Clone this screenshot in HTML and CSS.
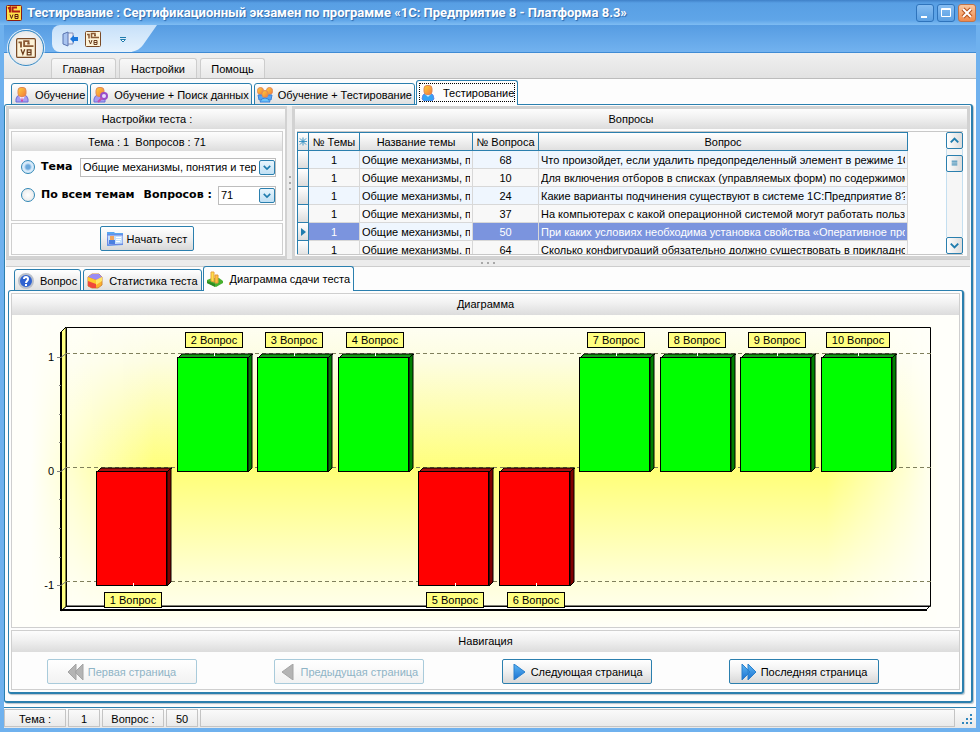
FILE: index.html
```html
<!DOCTYPE html>
<html lang="ru">
  <head>
    <meta charset="UTF-8" />
    <meta name="viewport" content="width=device-width, initial-scale=1.0" />
    <title>Тестирование : Сертификационный экзамен</title>
    <link rel="stylesheet" href="styles.css">
  </head>
  <body>
    <!-- shared icons -->
    <svg class="defs" width="0" height="0" aria-hidden="true">
      <defs>
        <linearGradient id="skin" x1="0" y1="0" x2="1" y2="1">
          <stop offset="0" stop-color="#ffd23c" />
          <stop offset="1" stop-color="#f2793a" />
        </linearGradient>
        <linearGradient id="arrowBlue" x1="0" y1="0" x2="0" y2="1">
          <stop offset="0" stop-color="#5db8f5" />
          <stop offset="1" stop-color="#1a6fd0" />
        </linearGradient>
        <linearGradient id="quickBg" x1="0" y1="0" x2="0" y2="1">
          <stop offset="0" stop-color="#c6e0f9" />
          <stop offset="1" stop-color="#e6f2fd" />
        </linearGradient>
        <symbol id="logo" viewBox="0 0 16 16">
          <rect x="0.500" y="0.500" width="15" height="15" rx="1" fill="#fdf3d8" stroke="#7a4a26" />
          <path d="M2 3.500h2v4M10 4.500V2.500H6.500v4H14M9 4.500h2" fill="none" stroke="#8a5a34" stroke-width="1.500" />
          <path d="M4 9l1.500 4L7 9M9 9.500h3v4H9zM9 11.500h3" fill="none" stroke="#6b3c1c" />
        </symbol>
        <symbol id="person" viewBox="0 0 16 16">
          <path d="M2 15v-3q1-4 4-4h4q3 0 4 4v3z" fill="#a99cf0" stroke="#6a6fd8" />
          <path d="M5 9l3 5 3-5z" fill="#f6eefc" />
          <path d="M8 10l1 4-1 1-1-1z" fill="#d03c9c" />
          <rect x="4" y="0.500" width="8" height="9" rx="3" fill="url(#skin)" stroke="#e08858" />
        </symbol>
        <symbol id="personSearch" viewBox="0 0 16 16">
          <path d="M1 15v-3q1-4 4-4h3q3 0 4 4v3z" fill="#a99cf0" stroke="#6a6fd8" />
          <rect x="3" y="0.500" width="8" height="9" rx="3" fill="url(#skin)" stroke="#e08858" />
          <circle cx="11" cy="9" r="3" fill="#e6dcff" stroke="#9a4cc8" stroke-width="2" />
          <path d="M9 11l-4 4" stroke="#c050b0" stroke-width="2" />
        </symbol>
        <symbol id="group" viewBox="0 0 16 16">
          <rect x="0.500" y="0.500" width="6" height="7" rx="3" fill="url(#skin)" stroke="#e08858" />
          <rect x="9.500" y="0.500" width="6" height="7" rx="3" fill="url(#skin)" stroke="#e08858" />
          <path d="M1 8h14l-1 5H2z" fill="#56a4f2" stroke="#3a82dc" />
          <rect x="5" y="3.500" width="6" height="7" rx="3" fill="url(#skin)" stroke="#e08858" />
          <path d="M3 15q1-4 5-4t5 4z" fill="#6cc4fa" stroke="#3a82dc" />
        </symbol>
        <symbol id="personBlue" viewBox="0 0 16 16">
          <path d="M2 14q0-5 4-6h4q4 1 4 6l-2 2H4z" fill="#35a4f4" stroke="#5f86e8" />
          <path d="M5 9l3 3 3-3z" fill="#c8f0ff" />
          <rect x="4" y="0.500" width="8" height="9" rx="3" fill="url(#skin)" stroke="#e08858" />
        </symbol>
        <symbol id="help" viewBox="0 0 16 16">
          <circle cx="8" cy="8" r="7" fill="#2f62d0" stroke="#b9bfca" stroke-width="2" />
          <path d="M6 6q0-2 2-2t2 2q0 1-1 2t-1 2M8 11v2" fill="none" stroke="#fff" stroke-width="2" />
        </symbol>
        <symbol id="cube" viewBox="0 0 16 16">
          <path d="M1 4l4-3h7l3 3v8l-4 3H5l-4-2z" fill="#ffb12c" stroke="#d08a3c" />
          <path d="M1 4l4-3h7l3 3-6 3z" fill="#9a8cf4" />
          <path d="M1 4l8 3v8H5l-4-2z" fill="#f0483c" />
          <path d="M1 4l8 3v4L1 8z" fill="#ffcb2e" />
          <path d="M9 7l6-3v4l-6 4z" fill="#ffe566" />
        </symbol>
        <symbol id="bars" viewBox="0 0 16 16">
          <path d="M0 9l5-2h7l4 3v2l-7 4-9-4z" fill="#48b030" />
          <path d="M0 10l8 3v3l-8-4z" fill="#2f8a24" />
          <path d="M4 1h3v10l-3-1z" fill="#ffe04a" stroke="#e8a23c" />
          <path d="M8 4h3v8H8z" fill="#ffc23c" stroke="#e0983c" />
        </symbol>
        <symbol id="card" viewBox="0 0 16 16">
          <path d="M0 1h7l1 1h8v12l-16 1z" fill="#5aa4f0" />
          <path d="M0 4h16v9l-15 1z" fill="#c4e0fc" stroke="#6b7fe0" />
          <rect x="3" y="5" width="4" height="4" fill="#f2a45c" />
          <rect x="2" y="9" width="6" height="4" fill="#4a80e0" />
          <path d="M9 6.500h5M9 8.500h5M9 10.500h4" stroke="#fff" />
        </symbol>
        <symbol id="door" viewBox="0 0 16 16">
          <path d="M6 2h5v11H6" fill="#e8ecf8" stroke="#8490b8" />
          <path d="M1 3l5-2v14l-5-2z" fill="#a9c4f0" stroke="#5a74b0" />
          <path d="M8 8l4-4v2h4v4h-4v2z" fill="#1c78dc" />
        </symbol>
        <symbol id="chevron" viewBox="0 0 16 16">
          <path d="M4 6l4 4 4-4" fill="none" stroke="#1f7cae" stroke-width="2" />
        </symbol>
        <symbol id="barUp" viewBox="0 0 76 120">
          <path d="M1 5l4-4h71l-4 4z" fill="#129a12" stroke="#000" />
          <path d="M71 5l4-4v114l-4 4z" fill="#008000" stroke="#000" />
          <rect x="0.500" y="4.500" width="70" height="114" fill="#0f0" stroke="#000" />
          <path d="M37.500 0v3" stroke="#fff" />
        </symbol>
        <symbol id="barDown" viewBox="0 0 76 120">
          <path d="M1 5l4-4h71l-4 4z" fill="#a80f0f" stroke="#000" />
          <path d="M71 5l4-4v114l-4 4z" fill="#800000" stroke="#000" />
          <rect x="0.500" y="4.500" width="70" height="114" fill="#f00" stroke="#000" />
          <path d="M37.500 116v3" stroke="#fff" />
        </symbol>
      </defs>
    </svg>

    <div class="window">
      <header class="titlebar">
        <svg class="icon" viewBox="0 0 16 16">
          <rect x="0.500" y="0.500" width="15" height="15" rx="1" fill="#ffe14a" stroke="#8a1c14" />
          <path d="M2 3.500l2-1v5M10 3.500V2.500H6.500v4H14" fill="none" stroke="#b01c14" stroke-width="2" />
          <path d="M4 9.500l1.500 4L7 9.500M9 9.500h3v4H9zM9 11.500h3" fill="none" stroke="#5c1c10" />
        </svg>
        <h1>Тестирование : Сертификационный экзамен по программе «1С: Предприятие 8 - Платформа 8.3»</h1>
        <div class="window-buttons">
          <button type="button" aria-label="Свернуть">
            <svg viewBox="0 0 16 16"><path d="M4 11h6v2H4z" fill="#fff" /></svg>
          </button>
          <button type="button" aria-label="Развернуть">
            <svg viewBox="0 0 16 16"><path d="M3.500 3.500h9v8h-9zM3.500 4.500h9" fill="none" stroke="#fff" /></svg>
          </button>
          <button type="button" class="close" aria-label="Закрыть">
            <svg viewBox="0 0 16 16"><path d="M4 4l8 8M12 4l-8 8" stroke="#b5501c" stroke-width="4" /><path d="M4 4l8 8M12 4l-8 8" stroke="#fff" stroke-width="2" /></svg>
          </button>
        </div>
      </header>

      <div class="ribbon">
        <button type="button" class="app-button" aria-label="Меню">
          <svg><use href="#logo" /></svg>
        </button>
        <div class="quick-access">
          <button type="button" aria-label="Выход"><svg class="icon"><use href="#door" /></svg></button>
          <button type="button" aria-label="О программе"><svg class="icon"><use href="#logo" /></svg></button>
          <button type="button" class="more" aria-label="Ещё">
            <svg class="icon" viewBox="0 0 16 16"><path d="M5 6.500h6M5.500 8.500h5L8 11z" fill="#fff" stroke="#1f7cae" /></svg>
          </button>
        </div>
        <svg class="quick-edge" viewBox="0 0 28 27"><path d="M0 0h25L11 20Q6 27-4 27H0z" fill="url(#quickBg)" /></svg>
      </div>
      <nav class="ribbon-tabs">
        <button type="button">Главная</button>
        <button type="button" class="wide">Настройки</button>
        <button type="button">Помощь</button>
      </nav>

      <nav class="tabs">
        <button type="button"><svg class="icon"><use href="#person" /></svg>Обучение</button>
        <button type="button"><svg class="icon"><use href="#personSearch" /></svg>Обучение + Поиск данных</button>
        <button type="button"><svg class="icon"><use href="#group" /></svg>Обучение + Тестирование</button>
        <button type="button" class="active focused"><svg class="icon"><use href="#personBlue" /></svg>Тестирование</button>
      </nav>

      <main class="page">
        <div class="top">
          <section class="settings">
            <h2>Настройки теста :</h2>
            <form class="box" id="testForm">
              <h3>Тема : 1&nbsp; Вопросов : 71</h3>
              <div class="row">
                <input type="radio" name="mode" id="modeTheme" checked />
                <label for="modeTheme">Тема</label>
                <span class="select theme">
                  <select aria-label="Тема">
                    <option>Общие механизмы, понятия и термины</option>
                  </select>
                  <svg><use href="#chevron" /></svg>
                </span>
              </div>
              <div class="row">
                <input type="radio" name="mode" id="modeAll" />
                <label for="modeAll">По всем темам</label>
                <label for="count" class="count-label">Вопросов :</label>
                <span class="select count">
                  <select id="count">
                    <option>71</option>
                  </select>
                  <svg><use href="#chevron" /></svg>
                </span>
              </div>
            </form>
            <div class="box start">
              <button type="submit" form="testForm" class="push"><svg class="icon"><use href="#card" /></svg>Начать тест</button>
            </div>
          </section>

          <div class="splitter-v"><i></i><i></i><i></i></div>

          <section class="questions">
            <h2>Вопросы</h2>
            <div class="grid-area">
              <div class="grid">
                <table>
                  <colgroup>
                    <col class="c-mark" />
                    <col class="c-theme" />
                    <col class="c-name" />
                    <col class="c-num" />
                    <col class="c-text" />
                  </colgroup>
                  <thead>
                    <tr>
                      <th><svg class="star" viewBox="0 0 9 9"><path d="M4.500 0v9M0 4.500h9M1 1l7 7M8 1L1 8" stroke="#2c8cc0" /></svg></th>
                      <th>№ Темы</th>
                      <th>Название темы</th>
                      <th>№ Вопроса</th>
                      <th>Вопрос</th>
                    </tr>
                  </thead>
                  <tbody>
                    <tr><td></td><td>1</td><td><div>Общие механизмы, понятия</div></td><td>68</td><td><div>Что произойдет, если удалить предопределенный элемент в режиме 1С:</div></td></tr>
                    <tr><td></td><td>1</td><td><div>Общие механизмы, понятия</div></td><td>10</td><td><div>Для включения отборов в списках (управляемых форм) по содержимому</div></td></tr>
                    <tr><td></td><td>1</td><td><div>Общие механизмы, понятия</div></td><td>24</td><td><div>Какие варианты подчинения существуют в системе 1С:Предприятие 8?</div></td></tr>
                    <tr><td></td><td>1</td><td><div>Общие механизмы, понятия</div></td><td>37</td><td><div>На компьютерах с какой операционной системой могут работать пользователи</div></td></tr>
                    <tr class="selected"><td><svg class="marker" viewBox="0 0 5 8"><path d="M0 0l5 4-5 4z" fill="#1f7cae" /></svg></td><td>1</td><td><div>Общие механизмы, понятия</div></td><td>50</td><td><div>При каких условиях необходима установка свойства «Оперативное проведение»</div></td></tr>
                    <tr><td></td><td>1</td><td><div>Общие механизмы, понятия</div></td><td>64</td><td><div>Сколько конфигураций обязательно должно существовать в прикладном решении</div></td></tr>
                  </tbody>
                </table>
              </div>
              <div class="scrollbar">
                <button type="button" aria-label="Вверх"><svg viewBox="0 0 16 16"><path d="M4 10l4-4 4 4" fill="none" stroke="#1f7cae" stroke-width="2" /></svg></button>
                <div class="track">
                  <div class="thumb"><svg viewBox="0 0 16 16"><path d="M5 5.500h6M5 7.500h6M5 9.500h6" stroke="#1f7cae" /></svg></div>
                </div>
                <button type="button" aria-label="Вниз"><svg viewBox="0 0 16 16"><use href="#chevron" /></svg></button>
              </div>
            </div>
          </section>
        </div>

        <div class="splitter-h"><i></i><i></i><i></i></div>

        <nav class="tabs inner-tabs">
          <button type="button"><svg class="icon"><use href="#help" /></svg>Вопрос</button>
          <button type="button"><svg class="icon"><use href="#cube" /></svg>Статистика теста</button>
          <button type="button" class="active"><svg class="icon"><use href="#bars" /></svg>Диаграмма сдачи теста</button>
        </nav>

        <div class="page inner-page">
          <section class="chart-box">
            <h2>Диаграмма</h2>
            <svg class="chart" viewBox="0 0 947 312" role="img" aria-label="Диаграмма сдачи теста">
              <defs>
                <linearGradient id="glow" x1="0" y1="0" x2="0" y2="1">
                  <stop offset="0" stop-color="#fffff8" />
                  <stop offset="0.150" stop-color="#fdfde0" />
                  <stop offset="0.500" stop-color="#ffff78" />
                  <stop offset="0.850" stop-color="#ffffd8" />
                  <stop offset="1" stop-color="#fffff8" />
                </linearGradient>
                <linearGradient id="fade" x1="0" y1="0" x2="1" y2="0">
                  <stop offset="0.020" stop-color="#000" />
                  <stop offset="0.150" stop-color="#fff" />
                  <stop offset="0.860" stop-color="#fff" />
                  <stop offset="0.980" stop-color="#000" />
                </linearGradient>
                <mask id="sides"><rect width="947" height="312" fill="url(#fade)" /></mask>
              </defs>
              <rect width="947" height="312" fill="#fffffa" />
              <rect width="947" height="312" fill="url(#glow)" mask="url(#sides)" />

              <!-- walls and axes -->
              <path d="M49 17l5-5v280l-5 4z" fill="#ffff80" stroke="#000" />
              <path d="M50 295l5-4h863l-4 4z" fill="#fff" stroke="#000" />
              <path d="M54.500 12.500h864v279h-864z" fill="none" stroke="#000" />
              <path d="M49 17v279M48 295h867" fill="none" stroke="#000" stroke-width="2" />
              <path d="M54 38.500h866M54 152.500h866M54 266.500h866" stroke="#80805c" stroke-dasharray="4 3" />
              <path d="M45 42.500h4l5-4M45 156.500h4l5-4M45 270.500h4l5-4M47 70.500h2M47 99.500h2M47 127.500h2M47 184.500h2M47 213.500h2M47 242.500h2" fill="none" stroke="#808080" />
              <g class="axis">
                <text x="42" y="46">1</text>
                <text x="42" y="160">0</text>
                <text x="42" y="274">-1</text>
              </g>

              <g>
                <use href="#barDown" x="84" y="152" width="76" height="120" />
                <use href="#barUp" x="165" y="38" width="76" height="120" />
                <use href="#barUp" x="245" y="38" width="76" height="120" />
                <use href="#barUp" x="326" y="38" width="76" height="120" />
                <use href="#barDown" x="406" y="152" width="76" height="120" />
                <use href="#barDown" x="487" y="152" width="76" height="120" />
                <use href="#barUp" x="567" y="38" width="76" height="120" />
                <use href="#barUp" x="648" y="38" width="76" height="120" />
                <use href="#barUp" x="728" y="38" width="76" height="120" />
                <use href="#barUp" x="809" y="38" width="76" height="120" />
              </g>

              <g class="marks">
                <rect x="92.500" y="277.500" width="57" height="15" /><text x="121" y="289">1 Вопрос</text>
                <rect x="173.500" y="17.500" width="57" height="15" /><text x="202" y="29">2 Вопрос</text>
                <rect x="253.500" y="17.500" width="57" height="15" /><text x="282" y="29">3 Вопрос</text>
                <rect x="334.500" y="17.500" width="57" height="15" /><text x="363" y="29">4 Вопрос</text>
                <rect x="414.500" y="277.500" width="57" height="15" /><text x="443" y="289">5 Вопрос</text>
                <rect x="495.500" y="277.500" width="57" height="15" /><text x="524" y="289">6 Вопрос</text>
                <rect x="575.500" y="17.500" width="57" height="15" /><text x="604" y="29">7 Вопрос</text>
                <rect x="656.500" y="17.500" width="57" height="15" /><text x="685" y="29">8 Вопрос</text>
                <rect x="736.500" y="17.500" width="57" height="15" /><text x="765" y="29">9 Вопрос</text>
                <rect x="814.500" y="17.500" width="63" height="15" /><text x="846" y="29">10 Вопрос</text>
              </g>
            </svg>
          </section>

          <section class="nav-box">
            <h2>Навигация</h2>
            <div class="pager">
              <button type="button" class="push" disabled>
                <svg class="icon" viewBox="0 0 16 16"><path d="M8 0v16L0 8zM15 0v16L7 8z" fill="#b4b4b4" stroke="#a4a4a4" /></svg>Первая страница
              </button>
              <button type="button" class="push" disabled>
                <svg class="icon" viewBox="0 0 16 16"><path d="M13 0v16L2 8z" fill="#b4b4b4" stroke="#a4a4a4" /></svg>Предыдущая страница
              </button>
              <button type="button" class="push">
                <svg class="icon" viewBox="0 0 16 16"><path d="M3 0v16L14 8z" fill="url(#arrowBlue)" stroke="#2a80cc" /></svg>Следующая страница
              </button>
              <button type="button" class="push">
                <svg class="icon" viewBox="0 0 16 16"><path d="M1 0v16L9 8zM7 0v16L15 8z" fill="url(#arrowBlue)" stroke="#2a80cc" /></svg>Последняя страница
              </button>
            </div>
          </section>
        </div>
      </main>

      <footer class="status">
        <span class="cell w-label">Тема :</span>
        <span class="cell w-value">1</span>
        <span class="cell w-label">Вопрос :</span>
        <span class="cell w-value">50</span>
        <span class="cell rest"></span>
        <svg class="grip" viewBox="0 0 12 12"><path d="M9 0h2v2H9zM5 4h2v2H5zM9 4h2v2H9zM1 8h2v2H1zM5 8h2v2H5zM9 8h2v2H9z" fill="#2f86bd" /></svg>
      </footer>
    </div>
  </body>
</html>
```
FILE: styles.css
```css
* {
  box-sizing: border-box;
}
body {
  margin: 0;
  font-family: "Liberation Sans", Arial, sans-serif;
  font-size: 11px;
  line-height: 14px;
  color: #000;
  background: #fdfdfd;
}
button,
select {
  font: inherit;
  color: inherit;
}
h1,
h2,
h3 {
  margin: 0;
  font-size: 11px;
  font-weight: normal;
}
svg {
  display: block;
}
.defs {
  position: absolute;
}
.icon {
  flex: none;
  width: 16px;
  height: 16px;
}

.window {
  display: flex;
  flex-direction: column;
  min-height: 100vh;
  background: #fdfdfd;
  border: solid #6fb1ee;
  border-width: 0 4px 4px;
}

/* title bar */
.titlebar {
  display: flex;
  align-items: center;
  gap: 5px;
  height: 25px;
  margin: 0 -4px;
  padding: 0 4px 0 6px;
  background: linear-gradient(#3f80c8, #589fe4 3px, #5fa5e8 20px, #7fbdf3);
}
.titlebar h1 {
  flex: 1;
  font-family: Roboto, sans-serif;
  font-size: 13px;
  font-weight: bold;
  color: #fff;
  text-shadow: 1px 1px 1px #2c66a8;
  white-space: nowrap;
}
.window-buttons {
  display: flex;
  gap: 3px;
}
.window-buttons button {
  width: 18px;
  height: 18px;
  padding: 0;
  border: 1px solid #2f74bc;
  border-radius: 3px;
  background: linear-gradient(#86bdf2, #5a9fe2);
}
.window-buttons .close {
  border-color: #c0744a;
  background: linear-gradient(#fbc8a0, #f08a4c);
}

/* ribbon */
.ribbon {
  position: relative;
  display: flex;
  height: 28px;
  padding-left: 48px;
  background: linear-gradient(#569ce2, #72b2ef);
  border-bottom: 1px solid #3f8bd4;
}
.app-button {
  position: absolute;
  left: 4px;
  top: 5px;
  width: 36px;
  height: 36px;
  padding: 7px;
  border: 1px solid #3a8bc4;
  border-radius: 50%;
  background: radial-gradient(#fff, #eee 60%, #cfd6dc);
  box-shadow: 0 0 0 1px #e4f1fb;
}
.app-button svg {
  width: 20px;
  height: 20px;
}
.quick-access {
  display: flex;
  align-items: center;
  gap: 7px;
  width: 80px;
  padding-left: 10px;
  background: linear-gradient(#c6e0f9, #e6f2fd);
  border-radius: 8px 0 0 8px;
}
.quick-access button {
  padding: 0;
  border: 0;
  background: none;
}
.quick-access .more {
  margin-left: 7px;
}
.quick-edge {
  width: 28px;
  height: 27px;
}
.ribbon-tabs {
  display: flex;
  gap: 3px;
  height: 26px;
  padding: 5px 0 0 47px;
  background: linear-gradient(#f0f0f0, #e2e2e2);
  border-bottom: 1px solid #bcbcbc;
}
.ribbon-tabs button {
  width: 65px;
  padding: 0;
  border: 1px solid #cdcdcd;
  border-bottom: 0;
  border-radius: 3px 3px 0 0;
  background: linear-gradient(#f8f8f8, #e8e8e8);
}
.ribbon-tabs .wide {
  width: 78px;
}

/* tabs */
.tabs {
  position: relative;
  z-index: 1;
  display: flex;
  align-items: flex-end;
  gap: 2px;
  height: 26px;
  margin-bottom: -1px;
  padding-left: 7px;
}
.tabs button {
  display: flex;
  align-items: center;
  gap: 5px;
  height: 22px;
  padding: 1px 2px 0;
  white-space: nowrap;
  border: 1px solid #2b7fae;
  border-radius: 3px 3px 0 0;
  background: linear-gradient(#fff, #e0e0e0);
}
.tabs .active {
  gap: 7px;
  height: 25px;
  padding: 0 3px;
  margin-left: -1px;
  border-bottom: 0;
  background: #fdfdfd;
}
.tabs .focused {
  outline: 1px dotted #000;
  outline-offset: -4px;
}
.inner-tabs {
  height: 24px;
  padding-left: 8px;
}
.inner-tabs button {
  gap: 6px;
  padding: 1px 3px 0;
}

.page {
  flex: 1;
  display: flex;
  flex-direction: column;
  margin-right: 3px;
  padding: 1px 1px 7px;
  border: solid #2b7fae;
  border-width: 1px 2px 2px 1px;
  border-radius: 3px;
  box-shadow: 1px 1px 1px #b8c4cc;
}
.inner-page {
  margin: 0 6px 0 2px;
  padding: 2px;
}
.page h2,
.page h3 {
  height: 20px;
  padding-top: 3px;
  text-align: center;
  background: linear-gradient(#fdfdfd, #f2f2f2 40%, #dcdcdc);
}
.page h3 {
  height: 19px;
}

/* top half */
.top {
  display: flex;
  height: 153px;
}
.settings {
  width: 281px;
  border: 3px solid #d2d2d2;
  border-right-width: 2px;
}
.box {
  margin: 2px;
  border: 1px solid #cfcfcf;
}
.settings form.box {
  height: 90px;
}
.settings .row {
  display: flex;
  align-items: center;
  height: 28px;
  padding: 0 6px 0 9px;
  font-family: "DejaVu Sans", sans-serif;
  font-weight: bold;
}
.row:first-of-type {
  margin-top: 2px;
}
.row input[type='radio'] {
  appearance: none;
  width: 14px;
  height: 14px;
  margin: 0 6px 0 0;
  border: 1px solid #2f86b5;
  border-radius: 50%;
  background: radial-gradient(#fff, #e4e4e4);
}
.row input[type='radio']:checked {
  background: radial-gradient(#6aa8dc 0 2px, #d6eafa 4px);
}
.count-label {
  margin-left: 9px;
}
.select {
  position: relative;
  margin-left: auto;
  font-family: "Liberation Sans", Arial, sans-serif;
  font-weight: normal;
}
.select select {
  appearance: none;
  display: block;
  width: 100%;
  height: 19px;
  padding: 0 19px 0 2px;
  border: 1px solid #bdbdbd;
  border-radius: 0;
  background: #fff;
}
.select svg {
  position: absolute;
  right: 1px;
  top: 2px;
  width: 16px;
  height: 15px;
  pointer-events: none;
  border: 1px solid #2b7fae;
  border-radius: 2px;
  background: linear-gradient(#e8f5fd, #c0e0f4);
}
.theme {
  width: 196px;
}
.count {
  width: 58px;
}
.start {
  display: flex;
  justify-content: center;
  height: 32px;
  padding-top: 2px;
}

.push {
  display: flex;
  align-items: center;
  justify-content: center;
  gap: 4px;
  height: 25px;
  padding: 0 6px;
  white-space: nowrap;
  border: 1px solid #2b7fae;
  border-radius: 2px;
  background: linear-gradient(#fff, #f0f0f0 50%, #d8d8d8);
}
.push:disabled {
  color: #8fb4c6;
  border-color: #a9cbdb;
  background: linear-gradient(#fff, #f2f2f2);
}

.splitter-v {
  display: flex;
  flex-direction: column;
  align-items: center;
  justify-content: center;
  gap: 4px;
  width: 5px;
  background: #ececec;
}
.splitter-v i,
.splitter-h i {
  width: 2px;
  height: 2px;
  background: #a8a8a8;
}
.splitter-h {
  display: flex;
  align-items: center;
  justify-content: center;
  gap: 4px;
  height: 8px;
  background: #ececec;
  border: solid #cdcdcd;
  border-width: 1px 0;
}

/* questions grid */
.questions {
  flex: 1;
  min-width: 0;
  display: flex;
  flex-direction: column;
  border: 3px solid #d2d2d2;
}
.grid-area {
  flex: 1;
  display: flex;
  min-height: 0;
  margin: 2px 4px 1px 2px;
  border-top: 1px solid #c8c8c8;
  border-bottom: 1px solid #c8c8c8;
}
.grid {
  flex: 1;
  min-width: 0;
  overflow: hidden;
}
.grid table {
  width: 611px;
  table-layout: fixed;
  border-collapse: separate;
  border-spacing: 0;
}
.c-mark {
  width: 12px;
}
.c-theme {
  width: 51px;
}
.c-name {
  width: 113px;
}
.c-num {
  width: 66px;
}
.grid th,
.grid td {
  height: 18px;
  padding: 0 2px;
  white-space: nowrap;
  text-align: center;
  font-weight: normal;
  border-right: 1px solid #d8d8d8;
  border-bottom: 1px solid #d8d8d8;
}
.grid td div {
  overflow: hidden;
  text-align: left;
}
.grid th {
  height: 19px;
  border: solid #2b7fae;
  border-width: 1px 1px 1px 0;
  background: linear-gradient(#fff, #e0e0e0);
}
.grid th:first-child,
.grid td:first-child {
  padding: 0 1px;
  border: solid #2b7fae;
  border-width: 0 1px 1px 1px;
}
.grid th:first-child {
  border-top-width: 1px;
}
.grid td:first-child {
  background: linear-gradient(#fff, #dcdcdc);
}
.grid tbody tr {
  background: #f8f8f8;
}
.grid tbody tr:nth-child(odd) {
  background: #eff6fe;
}
.grid .selected td:nth-child(2),
.grid .selected td:nth-child(4),
.grid .selected td:nth-child(5) {
  color: #fff;
  background: #7b94de;
}
.star {
  width: 8px;
  height: 9px;
}
.marker {
  width: 5px;
  height: 8px;
  margin-left: 2px;
}
.scrollbar {
  display: flex;
  flex-direction: column;
  width: 17px;
  background: #f6f6f6;
}
.scrollbar button,
.thumb {
  width: 17px;
  height: 17px;
  padding: 0;
  border: 1px solid #2b7fae;
  border-radius: 2px;
  background: linear-gradient(90deg, #fff, #dcdcdc);
}
.track {
  flex: 1;
  padding-top: 6px;
  border: solid #c4dff0;
  border-width: 0 1px;
}
.thumb {
  margin-left: -1px;
}

/* chart */
.chart-box,
.nav-box {
  border: 1px solid #cfcfcf;
}
.inner-page h2 {
  height: 21px;
}
.chart-box {
  margin-bottom: 2px;
}
.chart {
  width: 100%;
  height: auto;
}
.axis {
  text-anchor: end;
}
.marks {
  text-anchor: middle;
}
.marks rect {
  fill: #ffff80;
  stroke: #000;
}

.nav-box {
  flex: 1;
}
.pager {
  display: flex;
  justify-content: space-between;
  padding: 7px 80px 4px 35px;
}
.pager .push {
  width: 150px;
}

/* status bar */
.status {
  display: flex;
  gap: 2px;
  height: 21px;
  margin-top: 4px;
  padding: 1px 0;
  border-top: 1px solid #2b7fae;
  background: linear-gradient(#fcfcfc, #e8e8e8);
}
.cell {
  padding-top: 2px;
  text-align: center;
  border: 1px solid #c4c4c4;
}
.w-label {
  width: 62px;
}
.w-value {
  width: 32px;
}
.rest {
  flex: 1;
}
.grip {
  width: 12px;
  height: 12px;
  margin: 5px 3px 0 4px;
}
```
